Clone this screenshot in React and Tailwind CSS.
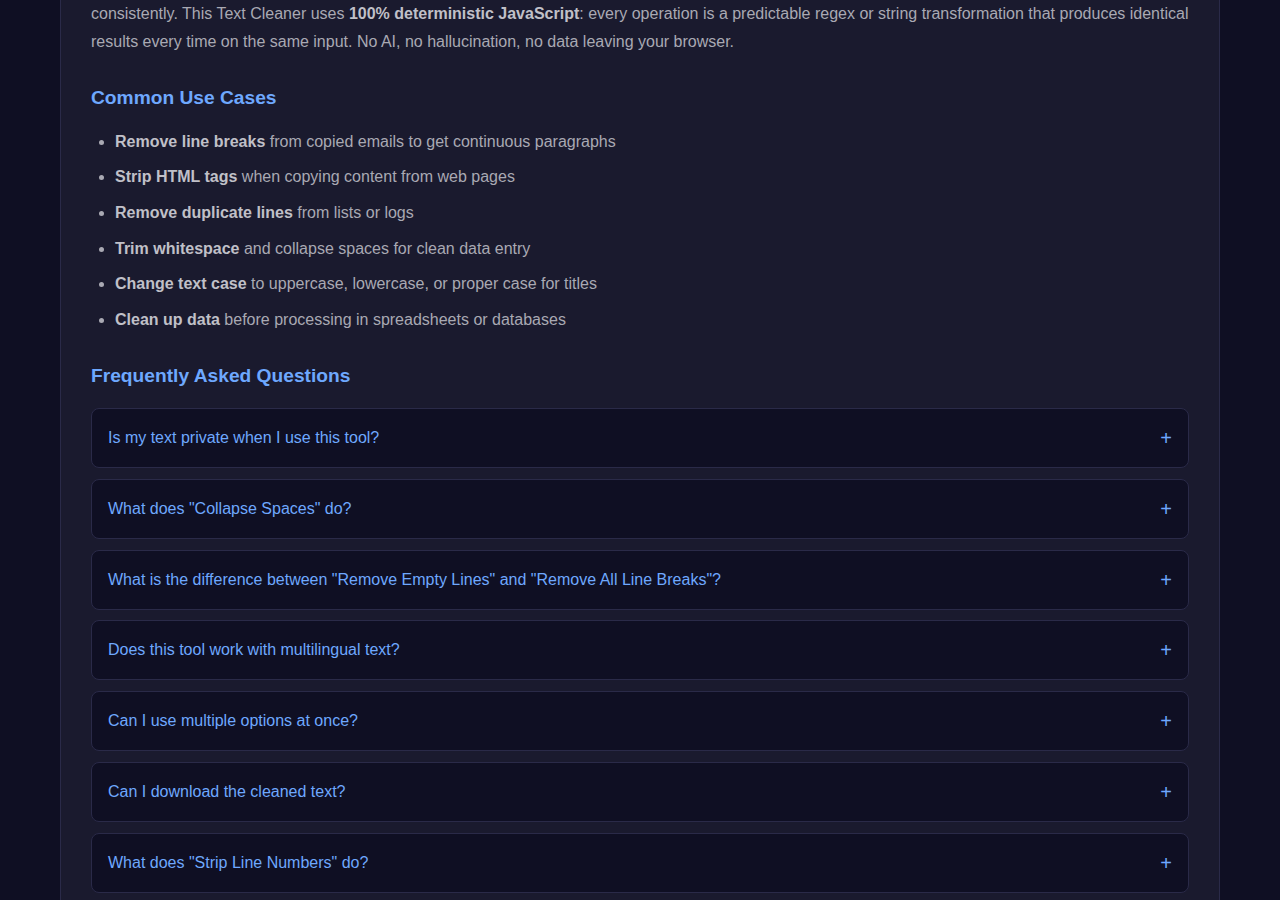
const useCases = [
  ['Remove line breaks', 'from copied emails to get continuous paragraphs'],
  ['Strip HTML tags', 'when copying content from web pages'],
  ['Remove duplicate lines', 'from lists or logs'],
  ['Trim whitespace', 'and collapse spaces for clean data entry'],
  ['Change text case', 'to uppercase, lowercase, or proper case for titles'],
  ['Clean up data', 'before processing in spreadsheets or databases'],
];

const faqs = [
  'Is my text private when I use this tool?',
  'What does "Collapse Spaces" do?',
  'What is the difference between "Remove Empty Lines" and "Remove All Line Breaks"?',
  'Does this tool work with multilingual text?',
  'Can I use multiple options at once?',
  'Can I download the cleaned text?',
  'What does "Strip Line Numbers" do?',
];

export default function App() {
  return (
    <div
      className="min-h-[900px] h-[900px] overflow-hidden bg-[#0f0f23]"
      style={{ fontFamily: '"Liberation Sans", Arial, sans-serif' }}
    >
      <div className="mx-auto w-[1160px] min-h-[900px] bg-[#1a1a2e] border-x border-[#2a2a48] px-[30px] flex flex-col">
        <p className="text-[16px] leading-[27.2px] text-[#a9a9b3] mt-[0.4px]">
          consistently. This Text Cleaner uses{' '}
          <strong className="font-bold text-[#c0c0c8]">100% deterministic JavaScript</strong>: every operation is a
          predictable regex or string transformation that produces identical results every time on the same input. No
          AI, no hallucination, no data leaving your browser.
        </p>

        <h2 className="mt-[30px] text-[19.2px] leading-[25px] font-bold text-[#6ea8fe]">Common Use Cases</h2>

        <ul className="mt-[19px] list-disc pl-[24px] flex flex-col text-[#a9a9b3] marker:text-[#a9a9b3]">
          {useCases.map(([b, rest]) => (
            <li key={b} className="text-[16px] leading-[25.6px] mb-[10px]">
              <strong className="font-bold text-[#c0c0c8]">{b}</strong> {rest}
            </li>
          ))}
        </ul>

        <h2 className="mt-[21px] text-[19.2px] leading-[25px] font-bold text-[#6ea8fe]">Frequently Asked Questions</h2>

        <div className="mt-[19.5px] flex flex-col gap-[10.83px]">
          {faqs.map((q) => (
            <div
              key={q}
              className="h-[60px] flex items-center justify-between rounded-[8px] border border-[#2a2a48] bg-[#0f0f23] px-[16px]"
            >
              <span className="text-[16px] text-[#6ea8fe]">{q}</span>
              <span className="text-[20px] leading-none text-[#6ea8fe]">+</span>
            </div>
          ))}
        </div>
      </div>
    </div>
  );
}
